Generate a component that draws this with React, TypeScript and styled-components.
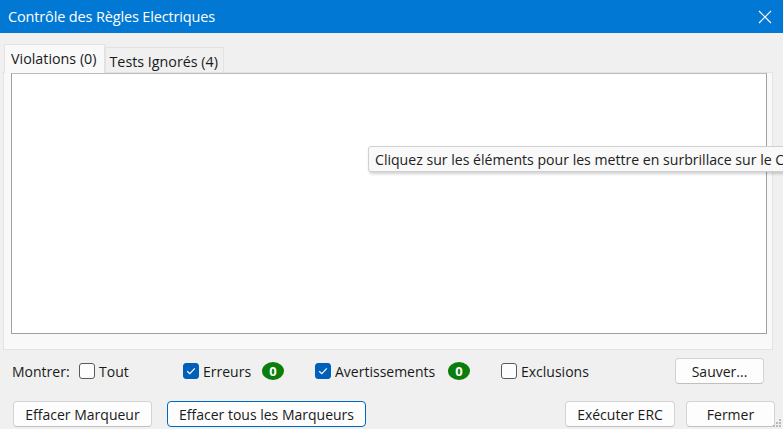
import React from "react";
import styled, { createGlobalStyle } from "styled-components";

const Global = createGlobalStyle`
  html, body { margin: 0; padding: 0; background: #f0f0f0; }
  body { font-family: "Open Sans", "Noto Sans", sans-serif; }
`;

const Window = styled.div`
  position: relative;
  width: 783px;
  height: 429px;
  background: #f0f0f0;
  overflow: hidden;
  display: flex;
  flex-direction: column;
  font-family: "Open Sans", "Noto Sans", sans-serif;
  color: #1a1a1a;
`;

const TitleBar = styled.div`
  height: 33px;
  flex: none;
  background: #0078d4;
  display: flex;
  align-items: center;
  justify-content: space-between;
  padding: 0 10px 0 8px;
  color: #fff;
  font-size: 14.5px;
`;

const Title = styled.span`
  letter-spacing: -0.15px;
  margin-top: -1px;
`;

const CloseBtn = styled.div`
  width: 16px;
  height: 16px;
  display: flex;
  align-items: center;
  justify-content: center;
`;

const Body = styled.div`
  flex: 1;
  display: flex;
  flex-direction: column;
  padding: 10px 8px 0 3px;
`;

const TabStrip = styled.div`
  display: flex;
  align-items: flex-end;
  height: 29px;
  padding-left: 1px;
`;

const Tab = styled.div<{ $active?: boolean }>`
  height: ${(p) => (p.$active ? 29 : 25)}px;
  padding: 0 ${(p) => (p.$active ? 7 : 5)}px 0 ${(p) => (p.$active ? 6 : 4)}px;
  display: flex;
  align-items: center;
  font-size: 14.3px;
  background: ${(p) => (p.$active ? "#f9f9f9" : "#f0f0f0")};
  border: 1px solid #e3e3e3;
  border-bottom: none;
  box-sizing: border-box;
  ${(p) => (p.$active ? "margin-bottom: -1px; z-index: 1; padding-bottom: 2px;" : "padding-top: 2px;")}
`;

const TabPanel = styled.div`
  height: 278px;
  width: 770px;
  box-sizing: border-box;
  background: #f9f9f9;
  border: 1px solid #e3e3e3;
  padding: 0 5px 15px 7px;
  display: flex;
`;

const ListBox = styled.div`
  flex: 1;
  background: #fff;
  border: 1px solid #a0a0a0;
  border-top-color: #bcbcbc;
`;

const OptionsRow = styled.div`
  display: flex;
  align-items: center;
  height: 26px;
  margin-top: 8px;
  padding-left: 9px;
  font-size: 14px;
`;

const Label = styled.span<{ $w?: number }>`
  ${(p) => (p.$w ? `width: ${p.$w}px;` : "")}
  flex: none;
`;

const CheckItem = styled.label<{ $w: number }>`
  display: flex;
  align-items: center;
  gap: 4px;
  width: ${(p) => p.$w}px;
  flex: none;
`;

const Box = styled.span<{ $checked?: boolean }>`
  width: 16px;
  height: 16px;
  box-sizing: border-box;
  border-radius: 3px;
  border: 1px solid ${(p) => (p.$checked ? "#005fb8" : "#5a5a5a")};
  background: ${(p) => (p.$checked ? "#005fb8" : "#fdfdfd")};
  display: flex;
  align-items: center;
  justify-content: center;
`;

const Badge = styled.span`
  width: 22px;
  height: 18px;
  border-radius: 50%;
  background: #0a7d0a;
  color: #fff;
  font-weight: 700;
  font-size: 13px;
  display: flex;
  align-items: center;
  justify-content: center;
  flex: none;
`;

const Button = styled.div<{ $w: number; $default?: boolean }>`
  width: ${(p) => p.$w}px;
  height: 26px;
  box-sizing: border-box;
  border: 1px solid ${(p) => (p.$default ? "#0067c0" : "#d3d3d3")};
  border-bottom-color: ${(p) => (p.$default ? "#0067c0" : "#c0c0c0")};
  border-radius: 4px;
  background: #fdfdfd;
  display: flex;
  align-items: center;
  justify-content: center;
  font-size: 14px;
  flex: none;
`;

const Spacer = styled.div`
  flex: 1;
`;

const ButtonRow = styled.div`
  display: flex;
  align-items: center;
  margin-top: 17px;
  padding-left: 10px;
`;

const Gap = styled.div<{ $w: number }>`
  width: ${(p) => p.$w}px;
  flex: none;
`;

const Tooltip = styled.div`
  position: absolute;
  left: 368px;
  top: 146px;
  height: 26px;
  width: 440px;
  box-sizing: border-box;
  background: #f9f9f9;
  border: 1px solid #d0d0d0;
  border-radius: 3px;
  box-shadow: 1px 2px 3px rgba(0, 0, 0, 0.18);
  padding: 0 6px;
  display: flex;
  align-items: center;
  font-size: 14.1px;
  color: #222;
  white-space: nowrap;
`;

const Grip = styled.svg`
  position: absolute;
  right: 1px;
  bottom: 1px;
`;

const Check = () => (
  <svg width="10" height="8" viewBox="0 0 10 8">
    <path d="M1.2 4.2 L3.8 6.6 L8.8 1.4" fill="none" stroke="#fff" strokeWidth="1.2" />
  </svg>
);

export default function App() {
  return (
    <>
      <Global />
      <Window>
        <TitleBar>
          <Title>Contrôle des Règles Electriques</Title>
          <CloseBtn>
            <svg width="14" height="14" viewBox="0 0 14 14">
              <path d="M1 1 L13 13 M13 1 L1 13" stroke="#fff" strokeWidth="1.2" />
            </svg>
          </CloseBtn>
        </TitleBar>
        <Body>
          <TabStrip>
            <Tab $active>Violations (0)</Tab>
            <Tab>Tests Ignorés (4)</Tab>
          </TabStrip>
          <TabPanel>
            <ListBox />
          </TabPanel>
          <OptionsRow>
            <Label $w={67}>Montrer:</Label>
            <CheckItem $w={104}>
              <Box />
              <span>Tout</span>
            </CheckItem>
            <CheckItem $w={79}>
              <Box $checked>
                <Check />
              </Box>
              <span>Erreurs</span>
            </CheckItem>
            <Badge>0</Badge>
            <Gap $w={31} />
            <CheckItem $w={133}>
              <Box $checked>
                <Check />
              </Box>
              <span>Avertissements</span>
            </CheckItem>
            <Badge>0</Badge>
            <Gap $w={31} />
            <CheckItem $w={120}>
              <Box />
              <span>Exclusions</span>
            </CheckItem>
            <Spacer />
            <Button $w={89}>Sauver...</Button>
            <Gap $w={11} />
          </OptionsRow>
          <ButtonRow>
            <Button $w={139}>Effacer Marqueur</Button>
            <Gap $w={15} />
            <Button $w={199} $default>
              Effacer tous les Marqueurs
            </Button>
            <Spacer />
            <Button $w={110}>Exécuter ERC</Button>
            <Gap $w={11} />
            <Button $w={89}>Fermer</Button>
          </ButtonRow>
        </Body>
        <Tooltip>Cliquez sur les éléments pour les mettre en surbrillace sur le Circuit</Tooltip>
        <Grip width="9" height="9" viewBox="0 0 9 9">
          <g fill="#b8b8b8">
            <rect x="6" y="0" width="2" height="2" />
            <rect x="3" y="3" width="2" height="2" />
            <rect x="6" y="3" width="2" height="2" />
            <rect x="0" y="6" width="2" height="2" />
            <rect x="3" y="6" width="2" height="2" />
            <rect x="6" y="6" width="2" height="2" />
          </g>
        </Grip>
      </Window>
    </>
  );
}
